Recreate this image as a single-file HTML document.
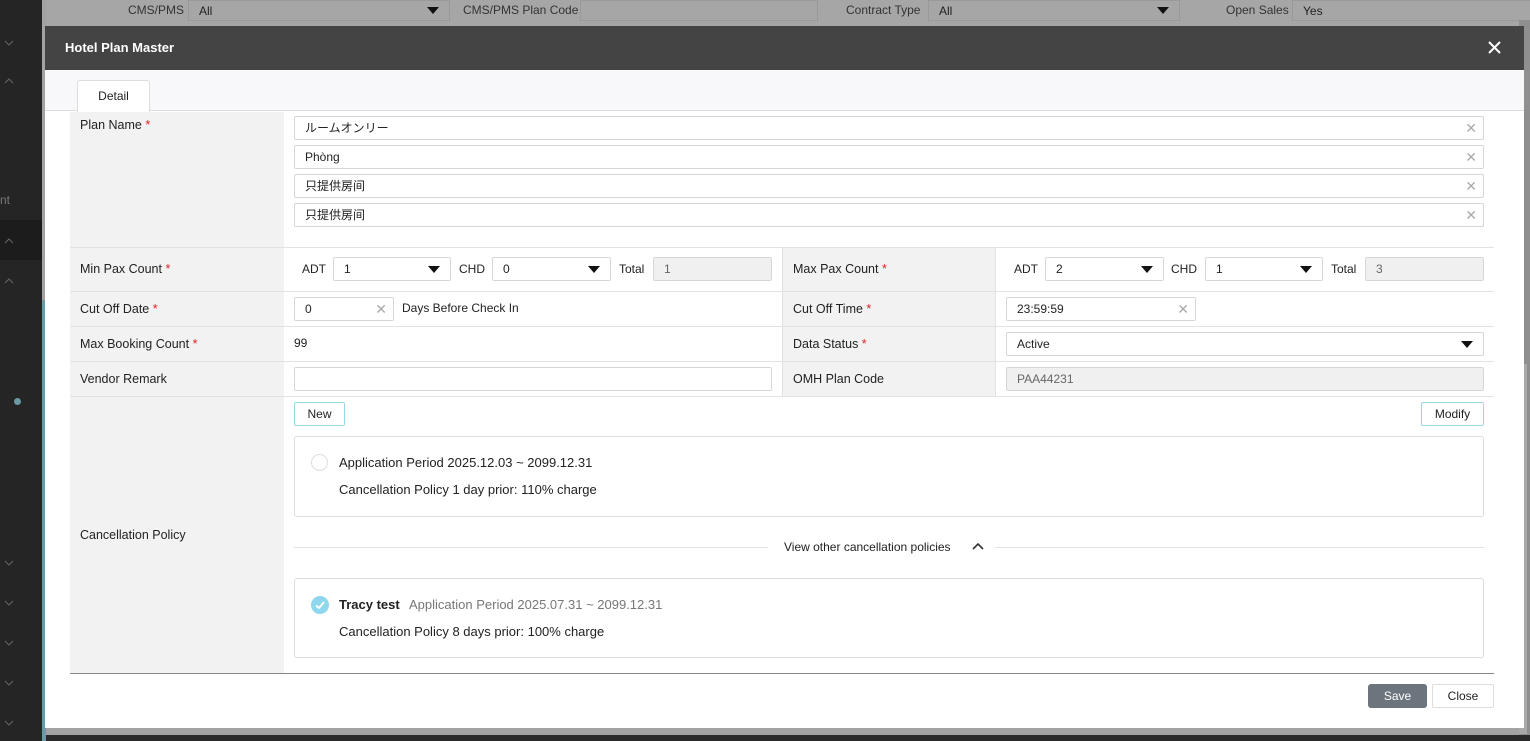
<!DOCTYPE html>
<html><head><meta charset="utf-8"><style>
*{box-sizing:border-box;margin:0;padding:0}
body{width:1530px;height:741px;overflow:hidden;background:#a3a3a3;font-family:"Liberation Sans","Noto Sans CJK JP",sans-serif;font-size:13px;color:#222;position:relative}
.a{position:absolute}
.side{left:0;top:0;width:42px;height:741px;background:#252525}
.inp{position:absolute;background:#fff;border:1px solid #d6d6d6;border-radius:2px;height:24px;padding-left:10px;line-height:22px;font-size:12px}
.dis{background:#f0f0f0;color:#666}
.lbl{position:absolute;background:#f2f2f2;font-size:12.5px;padding-left:10px}
.hl{position:absolute;height:1px;background:#e2e2e2}
.x{position:absolute;right:6px;top:0;color:#aaa;font-size:14px}
.tri{position:absolute;right:10px;top:8px;width:0;height:0;border-left:6px solid transparent;border-right:6px solid transparent;border-top:7px solid #111}
.req{color:#d22}
.btn{position:absolute;background:#fff;border:1px solid #9bd8e6;border-radius:2px;font-size:12px;text-align:center}
.ch{position:absolute;left:4px;width:10px;height:6px}
</style></head><body>
<div class="a side"></div>
<div class="a" style="left:0;top:220px;width:42px;height:40px;background:#1c1c1c"></div>
<div class="a" style="left:0;top:193px;color:#777;font-size:12px">nt</div>
<div class="a" style="left:42px;top:300px;width:4px;height:441px;background:#6b99a6"></div>
<div class="a" style="left:14px;top:398px;width:7px;height:7px;border-radius:50%;background:#6b99a6"></div>
<svg class="ch" style="top:40px"><path d="M1 1L5 5L9 1" stroke="#666" fill="none"/></svg>
<svg class="ch" style="top:78px"><path d="M1 5L5 1L9 5" stroke="#666" fill="none"/></svg>
<svg class="ch" style="top:238px"><path d="M1 5L5 1L9 5" stroke="#666" fill="none"/></svg>
<svg class="ch" style="top:278px"><path d="M1 5L5 1L9 5" stroke="#666" fill="none"/></svg>
<svg class="ch" style="top:560px"><path d="M1 1L5 5L9 1" stroke="#666" fill="none"/></svg>
<svg class="ch" style="top:600px"><path d="M1 1L5 5L9 1" stroke="#666" fill="none"/></svg>
<svg class="ch" style="top:640px"><path d="M1 1L5 5L9 1" stroke="#666" fill="none"/></svg>
<svg class="ch" style="top:680px"><path d="M1 1L5 5L9 1" stroke="#666" fill="none"/></svg>
<svg class="ch" style="top:720px"><path d="M1 1L5 5L9 1" stroke="#666" fill="none"/></svg>
<!-- background filter bar -->
<div class="a" style="left:46px;top:0;width:1484px;height:26px;background:#a6a6a6"></div>
<div class="a" style="left:128px;top:3px;font-size:12px;color:#333">CMS/PMS</div>
<div class="a" style="left:188px;top:0;width:262px;height:21px;border:1px solid #999;font-size:12px;padding:3px 10px;color:#222">All<span class="tri" style="top:6px"></span></div>
<div class="a" style="left:463px;top:3px;font-size:12px;color:#333">CMS/PMS Plan Code</div>
<div class="a" style="left:580px;top:0;width:238px;height:21px;border:1px solid #999"></div>
<div class="a" style="left:846px;top:3px;font-size:12px;color:#333">Contract Type</div>
<div class="a" style="left:928px;top:0;width:252px;height:21px;border:1px solid #999;font-size:12px;padding:3px 10px">All<span class="tri" style="top:6px"></span></div>
<div class="a" style="left:1226px;top:3px;font-size:12px;color:#333">Open Sales</div>
<div class="a" style="left:1292px;top:0;width:240px;height:21px;border:1px solid #999;font-size:12px;padding:3px 10px">Yes</div>
<div class="a" style="left:1519px;top:20px;width:11px;height:721px;background:#8f8f8f"></div>
<div class="a" style="left:1519px;top:364px;width:8px;height:370px;background:#a9a9a9"></div>
<div class="a" style="left:46px;top:735px;width:1484px;height:6px;background:#2a2a2a"></div>
<!-- modal -->
<div class="a" style="left:45px;top:26px;width:1479px;height:702px;background:#fff"></div>
<div class="a" style="left:45px;top:26px;width:1479px;height:44px;background:#444"></div>
<div class="a" style="left:65px;top:40px;color:#fff;font-weight:bold;font-size:13px">Hotel Plan Master</div>
<svg class="a" style="left:1488px;top:41px" width="13" height="13"><path d="M1 1L12 12M12 1L1 12" stroke="#fff" stroke-width="2"/></svg>
<div class="a" style="left:45px;top:70px;width:1479px;height:41px;background:#f8f8fa;border-bottom:1px solid #ddd"></div>
<div class="a" style="left:77px;top:80px;width:73px;height:32px;background:#fff;border:1px solid #ddd;border-bottom:none;border-radius:3px 3px 0 0;text-align:center;line-height:30px;font-size:12px">Detail</div>
<!-- labels -->
<div class="lbl" style="left:70px;top:112px;width:214px;height:135px;padding-top:6px">Plan Name <span class="req">*</span></div>
<div class="lbl" style="left:70px;top:248px;width:214px;height:43px;line-height:43px">Min Pax Count <span class="req">*</span></div>
<div class="lbl" style="left:70px;top:292px;width:214px;height:34px;line-height:34px">Cut Off Date <span class="req">*</span></div>
<div class="lbl" style="left:70px;top:327px;width:214px;height:34px;line-height:34px">Max Booking Count <span class="req">*</span></div>
<div class="lbl" style="left:70px;top:362px;width:214px;height:34px;line-height:34px">Vendor Remark</div>
<div class="lbl" style="left:70px;top:397px;width:214px;height:276px;line-height:276px">Cancellation Policy</div>
<div class="lbl" style="left:783px;top:248px;width:212px;height:43px;line-height:43px">Max Pax Count <span class="req">*</span></div>
<div class="lbl" style="left:783px;top:292px;width:212px;height:34px;line-height:34px">Cut Off Time <span class="req">*</span></div>
<div class="lbl" style="left:783px;top:327px;width:212px;height:34px;line-height:34px">Data Status <span class="req">*</span></div>
<div class="lbl" style="left:783px;top:362px;width:212px;height:34px;line-height:34px">OMH Plan Code</div>
<div class="hl" style="left:70px;top:247px;width:1424px"></div>
<div class="hl" style="left:70px;top:291px;width:1424px"></div>
<div class="hl" style="left:70px;top:326px;width:1424px"></div>
<div class="hl" style="left:70px;top:361px;width:1424px"></div>
<div class="hl" style="left:70px;top:396px;width:1424px"></div>
<div class="a" style="left:70px;top:673px;width:1424px;height:1px;background:#888"></div>
<div class="a" style="left:782px;top:248px;width:1px;height:148px;background:#e2e2e2"></div>
<div class="a" style="left:995px;top:248px;width:1px;height:148px;background:#e2e2e2"></div>
<!-- plan name inputs -->
<div class="inp" style="left:294px;top:116px;width:1190px">ルームオンリー<span class="x">✕</span></div>
<div class="inp" style="left:294px;top:145px;width:1190px">Phòng<span class="x">✕</span></div>
<div class="inp" style="left:294px;top:174px;width:1190px">只提供房间<span class="x">✕</span></div>
<div class="inp" style="left:294px;top:203px;width:1190px">只提供房间<span class="x">✕</span></div>
<!-- min pax -->
<div class="a" style="left:302px;top:262px;font-size:12px">ADT</div>
<div class="inp" style="left:333px;top:257px;width:118px">1<span class="tri"></span></div>
<div class="a" style="left:459px;top:262px;font-size:12px">CHD</div>
<div class="inp" style="left:492px;top:257px;width:119px">0<span class="tri"></span></div>
<div class="a" style="left:619px;top:262px;font-size:12px">Total</div>
<div class="inp dis" style="left:653px;top:257px;width:119px">1</div>
<div class="a" style="left:1014px;top:262px;font-size:12px">ADT</div>
<div class="inp" style="left:1045px;top:257px;width:119px">2<span class="tri"></span></div>
<div class="a" style="left:1171px;top:262px;font-size:12px">CHD</div>
<div class="inp" style="left:1205px;top:257px;width:118px">1<span class="tri"></span></div>
<div class="a" style="left:1331px;top:262px;font-size:12px">Total</div>
<div class="inp dis" style="left:1365px;top:257px;width:119px">3</div>
<!-- cutoff -->
<div class="inp" style="left:294px;top:297px;width:100px">0<span class="x">✕</span></div>
<div class="a" style="left:402px;top:301px;font-size:12px">Days Before Check In</div>
<div class="inp" style="left:1006px;top:297px;width:190px">23:59:59<span class="x">✕</span></div>
<div class="a" style="left:294px;top:336px;font-size:12px">99</div>
<div class="inp" style="left:1006px;top:332px;width:478px">Active<span class="tri"></span></div>
<div class="inp" style="left:294px;top:367px;width:478px"></div>
<div class="inp dis" style="left:1006px;top:367px;width:478px">PAA44231</div>
<!-- cancellation -->
<div class="btn" style="left:294px;top:402px;width:51px;height:24px;line-height:22px">New</div>
<div class="btn" style="left:1421px;top:402px;width:63px;height:24px;line-height:22px">Modify</div>
<div class="a" style="left:294px;top:436px;width:1190px;height:81px;border:1px solid #ddd;border-radius:3px"></div>
<div class="a" style="left:311px;top:454px;width:17px;height:17px;border:1px solid #ddd;border-radius:50%"></div>
<div class="a" style="left:339px;top:455px;font-size:13px">Application Period 2025.12.03 ~ 2099.12.31</div>
<div class="a" style="left:339px;top:482px;font-size:13px">Cancellation Policy 1 day prior: 110% charge</div>
<div class="hl" style="left:294px;top:547px;width:474px"></div>
<div class="hl" style="left:995px;top:547px;width:489px"></div>
<div class="a" style="left:784px;top:540px;font-size:12px">View other cancellation policies</div>
<svg class="a" style="left:972px;top:542px" width="12" height="9"><path d="M1 7L6 2L11 7" stroke="#333" stroke-width="1.6" fill="none"/></svg>
<div class="a" style="left:294px;top:578px;width:1190px;height:80px;border:1px solid #ddd;border-radius:3px"></div>
<div class="a" style="left:311px;top:596px;width:18px;height:18px;border-radius:50%;background:#8fd6ef"></div>
<svg class="a" style="left:311px;top:596px" width="18" height="18"><path d="M5 9.5L8 12L13 6" stroke="#fff" stroke-width="1.8" fill="none"/></svg>
<div class="a" style="left:339px;top:597px;font-size:13px;font-weight:bold">Tracy test</div>
<div class="a" style="left:409px;top:597px;font-size:13px;color:#777">Application Period 2025.07.31 ~ 2099.12.31</div>
<div class="a" style="left:339px;top:624px;font-size:13px">Cancellation Policy 8 days prior: 100% charge</div>
<!-- footer -->
<div class="a" style="left:1368px;top:684px;width:59px;height:24px;background:#6c757d;border-radius:3px;color:#fff;font-size:12px;text-align:center;line-height:24px">Save</div>
<div class="a" style="left:1432px;top:684px;width:62px;height:24px;border:1px solid #ddd;border-radius:2px;font-size:12px;text-align:center;line-height:22px">Close</div>
</body></html>
